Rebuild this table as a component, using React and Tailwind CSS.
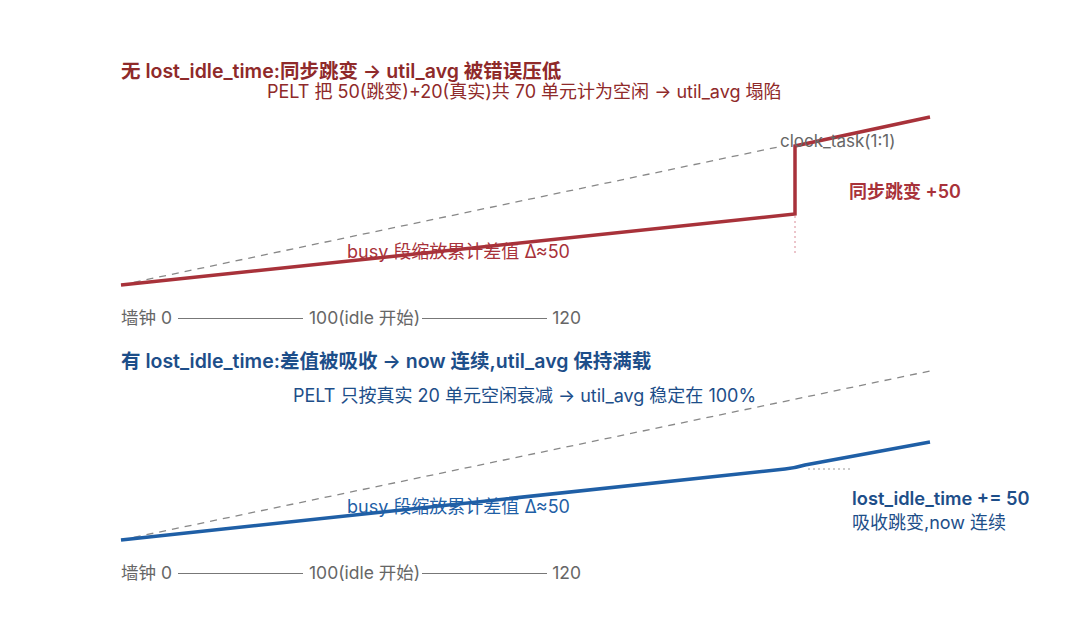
import React from 'react';

const font = { fontFamily: 'Inter, "Noto Sans CJK SC", sans-serif' };

function Axis() {
  return (
    <div className="flex items-center text-[17.5px] leading-[20px] text-[#666]">
      <span>墙钟 0</span>
      <span className="ml-[6px] mr-[6px] h-px w-[125px] bg-[#777]" />
      <span>100(idle 开始)</span>
      <span className="ml-[2px] mr-[5px] h-px w-[125px] bg-[#777]" />
      <span>120</span>
    </div>
  );
}

function Label({ className, children }) {
  return <div className={`absolute whitespace-nowrap leading-none ${className}`}>{children}</div>;
}

export default function App() {
  return (
    <div className="flex h-[644px] w-[1080px] flex-col overflow-hidden bg-white" style={font}>
      {/* 无 lost_idle_time */}
      <section className="relative flex h-[335px] flex-col pl-[121px] pt-[61px]">
        <svg className="absolute inset-0" width="1080" height="335" viewBox="0 0 1080 335">
          <line x1="121" y1="285" x2="778" y2="147" stroke="#888" strokeWidth="1.3" strokeDasharray="7 6" />
          <line x1="795" y1="216" x2="795" y2="256" stroke="#d88a96" strokeWidth="1" strokeDasharray="2 3" />
          <polyline points="121,285 795,214 795,146 930,117" fill="none" stroke="#a8323a" strokeWidth="3.5" />
        </svg>
        <h2 className="relative text-[19.5px] font-semibold leading-[20px] text-[#8f2a2a]">
          无 lost_idle_time:同步跳变 → util_avg 被错误压低
        </h2>
        <p className="relative ml-[146px] mt-[2px] text-[18px] leading-[18px] text-[#8f2a2a]">
          PELT 把 50(跳变)+20(真实)共 70 单元计为空闲 → util_avg 塌陷
        </p>
        <div className="h-[207px]" />
        <div className="relative">
          <Axis />
        </div>
        <Label className="left-[780px] top-[133px] text-[17px] text-[#666]">clock_task(1:1)</Label>
        <Label className="left-[849px] top-[183px] text-[18px] font-semibold text-[#a8323a]">同步跳变 +50</Label>
        <Label className="left-[347px] top-[243px] text-[18px] text-[#a8323a]">busy 段缩放累计差值 Δ≈50</Label>
      </section>

      {/* 有 lost_idle_time */}
      <section className="relative flex h-[309px] flex-col pl-[121px] pt-[15px]">
        <svg className="absolute inset-0" width="1080" height="309" viewBox="0 0 1080 309">
          <line x1="121" y1="205" x2="930" y2="36" stroke="#888" strokeWidth="1.3" strokeDasharray="7 6" />
          <line x1="808" y1="134" x2="852" y2="134" stroke="#999" strokeWidth="1" strokeDasharray="2 3" />
          <path d="M121 205 L785 134 Q795 133 805 130 L930 107" fill="none" stroke="#1f5fa6" strokeWidth="3.5" />
        </svg>
        <h2 className="relative text-[19.5px] font-semibold leading-[22px] text-[#1d4e89]">
          有 lost_idle_time:差值被吸收 → now 连续,util_avg 保持满载
        </h2>
        <p className="relative ml-[172px] mt-[14px] text-[18px] leading-[20px] text-[#1d4e89]">
          PELT 只按真实 20 单元空闲衰减 → util_avg 稳定在 100%
        </p>
        <div className="h-[157px]" />
        <div className="relative">
          <Axis />
        </div>
        <Label className="left-[347px] top-[163px] text-[18px] text-[#1f5fa6]">busy 段缩放累计差值 Δ≈50</Label>
        <Label className="left-[852px] top-[154px] text-[18.3px] font-semibold text-[#1d4e89]">lost_idle_time += 50</Label>
        <Label className="left-[852px] top-[179px] text-[18px] text-[#1d4e89]">吸收跳变,now 连续</Label>
      </section>
    </div>
  );
}
